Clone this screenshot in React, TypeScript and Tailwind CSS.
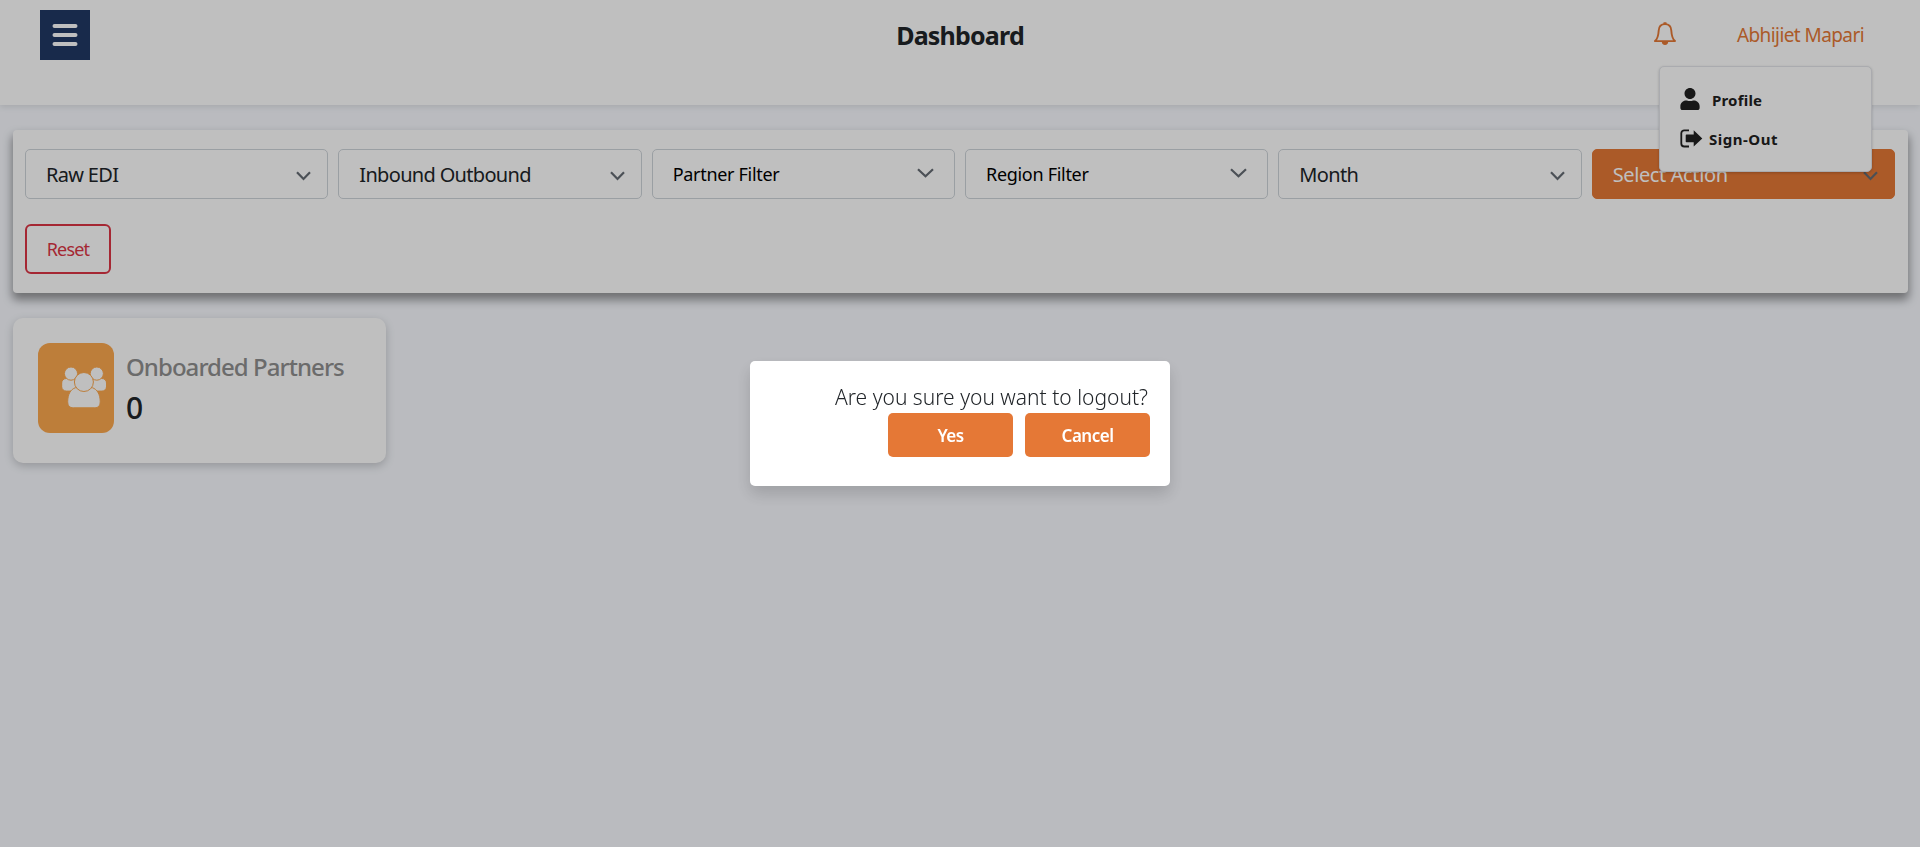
import type { ReactNode } from "react";
import { FaUser } from "react-icons/fa";

function MenuIcon() {
  return (
    <svg width="26" height="24" viewBox="0 0 26 24" fill="none" stroke="#fff" strokeWidth="4" strokeLinecap="round">
      <path d="M2.5 3H23.5M2.5 12H23.5M2.5 21H23.5" />
    </svg>
  );
}

function BellIcon() {
  return (
    <svg width="22" height="24" viewBox="0 0 22 24" fill="none" stroke="#e57836" strokeWidth="1.9" strokeLinejoin="round" strokeLinecap="round">
      <path d="M11 2.1c-3.9 0-6.1 2.8-6.3 6.4-.3 5.300-.9 8.300-3.700 10.600h20c-2.800-2.300-3.400-5.300-3.700-10.600C17.100 4.900 14.900 2.100 11 2.100z" />
      <path d="M10.200 1.300h1.600" />
      <path d="M7.800 19.500a3.200 3.400 0 0 0 6.400 0z" fill="#e57836" stroke="none" />
    </svg>
  );
}

function SignOutIcon() {
  return (
    <svg width="23" height="19" viewBox="0 0 23 19" className="text-[#212121]">
      <path d="M9 1.300H4.300a3 3 0 0 0-3 3v10.200a3 3 0 0 0 3 3H9" fill="none" stroke="currentColor" strokeWidth="1.800" />
      <path d="M6.500 5.600h7.200V1.200l8.600 8.200-8.600 8.200v-4.400H6.500a.8.8 0 0 1-.8-.8v-6a.8.8 0 0 1 .8-.8z" fill="currentColor" />
    </svg>
  );
}

function GroupIcon() {
  return (
    <svg width="44" height="41" viewBox="0 0 44 41" fill="#fff" stroke="#fda84e" strokeWidth="1">
      <rect x="-.3" y="11.500" width="16" height="12.600" rx="4.500" />
      <rect x="28.500" y="11.500" width="16" height="12.600" rx="4.500" />
      <circle cx="9" cy="6.600" r="6.600" />
      <circle cx="34.800" cy="6.600" r="6.600" />
      <path d="M13.500 20.700h16.800c5 1.500 7.900 7 7.900 13.800 0 4.500-2.200 6.300-5.400 6.300H11.400c-3.600 0-5.700-1.800-5.700-6.300 0-6.800 2.800-12.300 7.800-13.800z" />
      <circle cx="21.900" cy="15" r="9.500" />
    </svg>
  );
}

function Chevron({ wide = false }: { wide?: boolean }) {
  return (
    <svg
      width={wide ? 17 : 15}
      height="10"
      viewBox={wide ? "0 0 17 10" : "0 0 15 10"}
      fill="none"
      stroke="#656b73"
      strokeWidth="2.200"
      className={wide ? "mb-[2px]" : "mt-[3px]"}
    >
      <path d={wide ? "M1 1.200l7.500 7L16 1.200" : "M1 1.200l6.500 6.800L14 1.200"} />
    </svg>
  );
}

const box = "flex h-[50px] items-center justify-between rounded-[5px] border";

function Select({ children }: { children: ReactNode }) {
  return (
    <div className={`${box} border-[#ced4da] pl-5 pr-[16px] text-[20px] tracking-[-0.68px] text-[#212529]`}>
      <span className="pt-px">{children}</span>
      <Chevron />
    </div>
  );
}

function MultiSelect({ children }: { children: ReactNode }) {
  return (
    <div className={`${box} border-[#ced4da] pl-5 pr-[20px] text-[18px] tracking-[-0.3px] text-black`}>
      {children}
      <Chevron wide />
    </div>
  );
}

function Header() {
  return (
    <header className="relative flex h-[105px] items-start justify-between bg-white px-10 pt-[10px] shadow-[0_2px_6px_rgba(0,0,0,0.1)]">
      <div className="flex flex-1">
        <button className="flex size-[50px] items-center justify-center bg-[#203864]">
          <MenuIcon />
        </button>
      </div>
      <h1 className="text-[25px] font-bold leading-[50px] tracking-[-0.8px] text-[#212529]">Dashboard</h1>
      <div className="flex h-[50px] flex-1 items-center justify-end gap-[61px] text-[19px] tracking-[-0.58px] text-[#e57836]">
        <span className="-mt-[3px]">
          <BellIcon />
        </span>
        <span className="mr-4 pt-px">Abhijiet Mapari</span>
      </div>
      <div className="absolute right-[48px] top-[66px] z-10 flex h-[106px] w-[213px] flex-col rounded-[5px] border border-[#e3e5ea] bg-white pl-5 pt-[14px] text-[15px] font-bold text-[#212121] shadow-[0_1px_3px_rgba(0,0,0,0.2)]">
        <div className="flex h-[39px] items-center">
          <FaUser className="-mt-[3px] h-[22px] w-5" />
          <span className="ml-[12px] tracking-[0.2px]">Profile</span>
        </div>
        <div className="flex h-[39px] items-center">
          <span className="-mt-[3px]">
            <SignOutIcon />
          </span>
          <span className="ml-[6px] tracking-[0.5px]">Sign-Out</span>
        </div>
      </div>
    </header>
  );
}

function Filters() {
  return (
    <section className="h-[163px] rounded-[4px] bg-white pl-3 pr-[13px] pt-[19px] shadow-[0_6px_10px_1px_rgba(0,0,0,0.4)]">
      <div className="grid grid-cols-6 gap-[10px]">
        <Select>Raw EDI</Select>
        <Select>Inbound Outbound</Select>
        <MultiSelect>Partner Filter</MultiSelect>
        <MultiSelect>Region Filter</MultiSelect>
        <Select>Month</Select>
        <div className={`${box} border-[#e57836] bg-[#e57836] pl-5 pr-[16px] text-[20px] tracking-[-0.38px] text-white`}>
          <span className="pt-px">Select Action</span>
          <Chevron />
        </div>
      </div>
      <button className="mt-[25px] flex h-[50px] w-[86px] items-center justify-center rounded-[6px] border-2 border-[#dc3545] text-[18px] tracking-[-0.8px] text-[#dc3545]">
        Reset
      </button>
    </section>
  );
}

function PartnersCard() {
  return (
    <section className="mt-[25px] flex h-[145px] w-[373px] rounded-[10px] bg-white pl-[25px] pt-[25px] shadow-[0_3px_10px_rgba(0,0,0,0.2)]">
      <div className="flex h-[90px] w-[76px] items-start justify-end rounded-[12px] bg-[#fda84e] pr-[8px] pt-[24px]">
        <GroupIcon />
      </div>
      <div className="ml-3 flex flex-col">
        <div className="mt-[8px] text-[24px] font-medium leading-[32px] tracking-[-0.95px] text-[#8f8f8f]">Onboarded Partners</div>
        <div className="mt-[5px] text-[30px] font-medium leading-[40px] text-[#212529]">0</div>
      </div>
    </section>
  );
}

function LogoutDialog() {
  const button =
    "flex h-[44px] w-[125px] items-center justify-center rounded-[5px] bg-[#e57836] pt-px text-[17px] font-semibold tracking-[-0.5px] text-white";
  return (
    <div className="fixed inset-0 z-20 flex items-center justify-center bg-black/25">
      <div className="flex h-[125px] w-[420px] flex-col items-end rounded-[5px] bg-white pr-5 pt-5 shadow-[0_8px_16px_rgba(0,0,0,0.15)]">
        <p className="pr-[2px] text-[21px] font-light leading-[32px] text-[#212529]">Are you sure you want to logout?</p>
        <div className="flex gap-3">
          <button className={button}>Yes</button>
          <button className={button}>Cancel</button>
        </div>
      </div>
    </div>
  );
}

export default function App() {
  return (
    <div className="min-h-screen overflow-hidden bg-[#f8faff] font-['Noto_Sans',sans-serif]">
      <Header />
      <main className="pl-[13px] pr-[12px] pt-[25px]">
        <Filters />
        <PartnersCard />
      </main>
      <LogoutDialog />
    </div>
  );
}
